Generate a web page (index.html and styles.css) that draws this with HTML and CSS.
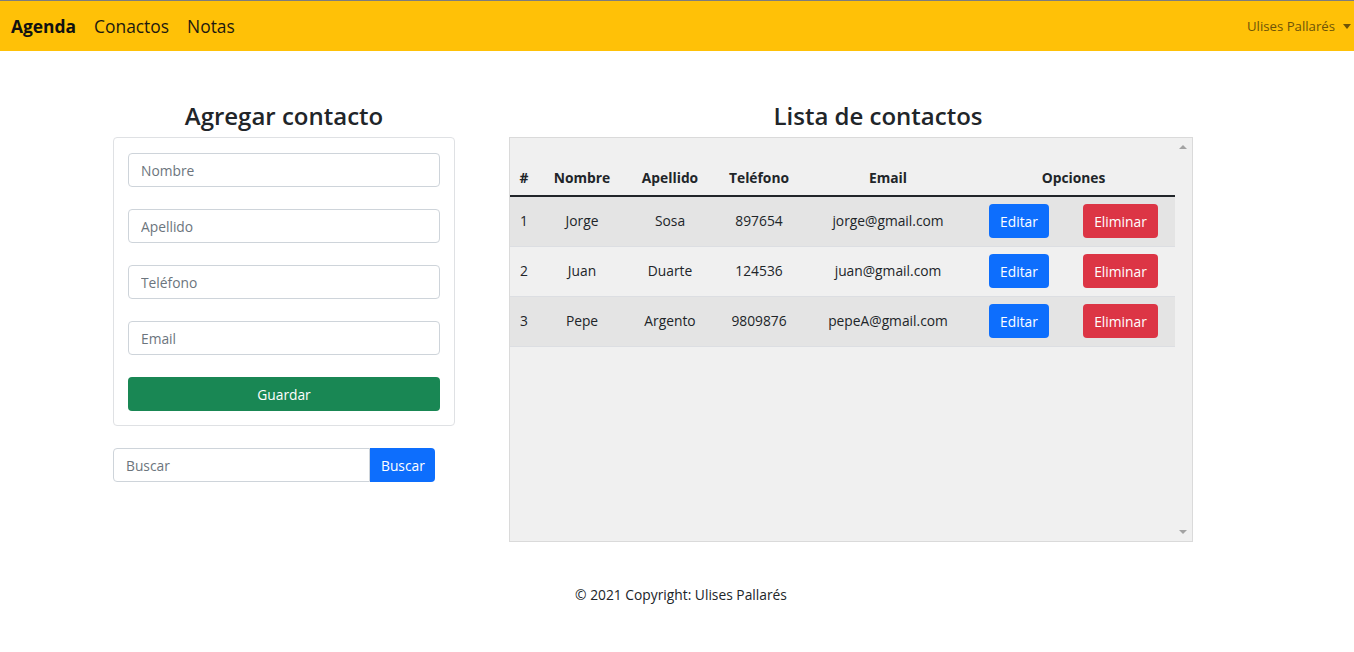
FILE: index.html
```html
<!DOCTYPE html>
<html lang="es">
<head>
<meta charset="utf-8">
<title>Agenda</title>
<link rel="stylesheet" href="styles.css">
</head>
<body>
<nav class="navbar">
  <div class="nav-left">
    <a class="brand">Agenda</a>
    <a class="nav-link">Conactos</a>
    <a class="nav-link">Notas</a>
  </div>
  <div class="user">Ulises Pallarés <span class="caret"></span></div>
</nav>
<main class="main">
  <section class="col-left">
    <h2 class="title">Agregar contacto</h2>
    <form class="card">
      <input class="field" placeholder="Nombre">
      <input class="field" placeholder="Apellido">
      <input class="field" placeholder="Teléfono">
      <input class="field" placeholder="Email">
      <button type="button" class="btn btn-green">Guardar</button>
    </form>
    <div class="search">
      <input class="search-input" placeholder="Buscar">
      <button type="button" class="btn btn-blue search-btn">Buscar</button>
    </div>
  </section>
  <section class="col-right">
    <h2 class="title">Lista de contactos</h2>
    <div class="table-box">
      <table class="table">
        <colgroup>
          <col class="c1"><col class="c2"><col class="c3"><col class="c4"><col class="c5"><col class="c6"><col class="c7">
        </colgroup>
        <thead>
          <tr><th>#</th><th>Nombre</th><th>Apellido</th><th>Teléfono</th><th>Email</th><th colspan="2">Opciones</th></tr>
        </thead>
        <tbody>
          <tr class="odd"><td>1</td><td>Jorge</td><td>Sosa</td><td>897654</td><td>jorge@gmail.com</td><td><button type="button" class="btn btn-blue">Editar</button></td><td><button type="button" class="btn btn-red">Eliminar</button></td></tr>
          <tr><td>2</td><td>Juan</td><td>Duarte</td><td>124536</td><td>juan@gmail.com</td><td><button type="button" class="btn btn-blue">Editar</button></td><td><button type="button" class="btn btn-red">Eliminar</button></td></tr>
          <tr class="odd"><td>3</td><td>Pepe</td><td>Argento</td><td>9809876</td><td>pepeA@gmail.com</td><td><button type="button" class="btn btn-blue">Editar</button></td><td><button type="button" class="btn btn-red">Eliminar</button></td></tr>
        </tbody>
      </table>
      <span class="arrow arrow-up"></span>
      <span class="arrow arrow-down"></span>
    </div>
  </section>
</main>
<footer class="footer">© 2021 Copyright: Ulises Pallarés</footer>
</body>
</html>
```
FILE: styles.css
```css
* { box-sizing: border-box; }
html, body { margin: 0; padding: 0; }
body {
  font-family: "Open Sans", "Noto Sans", sans-serif;
  font-size: 13.8px;
  color: #212529;
  background: #fff;
  line-height: 1.5;
}
.navbar {
  height: 51px;
  border-top: 1px solid #7d7d7d;
  background: #ffc107;
  display: flex;
  align-items: center;
  justify-content: space-between;
  padding: 1px 3px 0 11px;
}
.nav-left { display: flex; align-items: center; gap: 18px; }
.brand { font-weight: 700; font-size: 17.4px; color: #111; }
.nav-link { font-size: 17.4px; color: #1d1a10; }
.user { color: #6e5407; font-size: 13.2px; display: flex; align-items: center; gap: 8px; }
.caret {
  width: 0; height: 0;
  border-left: 4.5px solid transparent;
  border-right: 4.5px solid transparent;
  border-top: 5px solid #6e5407;
}
.main {
  display: flex;
  align-items: flex-start;
  padding: 44px 0 0 113px;
  gap: 54px;
}
.col-left { width: 342px; }
.col-right { width: 738px; }
.title {
  font-size: 24px;
  font-weight: 600;
  line-height: 35px;
  margin: 0 0 7px;
  padding-top: 3px;
  height: 35px;
  text-align: center;
}
.card {
  border: 1px solid #dfe1e4;
  border-radius: 4px;
  padding: 15px 14px 14px;
  display: flex;
  flex-direction: column;
  gap: 22px;
  margin: 0;
}
.field, .search-input {
  height: 34px;
  border: 1px solid #ced4da;
  border-radius: 4px;
  padding: 0 12px;
  font-family: inherit;
  font-size: 13.8px;
  color: #212529;
  background: #fff;
}
.field::placeholder, .search-input::placeholder { color: #6c757d; }
.btn {
  height: 34px;
  border: none;
  border-radius: 4px;
  font-family: inherit;
  font-size: 13.8px;
  color: #fff;
  padding: 0 11px;
  cursor: pointer;
}
.btn-green { background: #198754; width: 100%; }
.btn-blue { background: #0d6efd; }
.btn-red { background: #dc3545; }
.search { display: flex; margin-top: 22px; }
.search-input { width: 257px; border-radius: 4px 0 0 4px; }
.search-btn { width: 65px; border-radius: 0 4px 4px 0; }
.table-box {
  position: relative;
  width: 684px;
  height: 405px;
  background: #f0f0f0;
  border: 1px solid #dadada;
  padding: 20px 17px 0 0;
}
.table {
  width: 665px;
  border-collapse: collapse;
  table-layout: fixed;
}
.c1 { width: 28px; }
.c2 { width: 88px; }
.c3 { width: 88px; }
.c4 { width: 90px; }
.c5 { width: 168px; }
.c6 { width: 94px; }
.c7 { width: 109px; }
.table th {
  height: 38px;
  font-weight: 700;
  text-align: center;
  padding: 4px 0 0;
  border-bottom: 2px solid #212529;
}
.table td {
  height: 50px;
  text-align: center;
  padding: 0;
  border-bottom: 1px solid #dcdee2;
}
.table tr.odd td { background: #e4e4e4; }
.arrow {
  position: absolute;
  right: 5px;
  width: 0; height: 0;
  border-left: 4px solid transparent;
  border-right: 4px solid transparent;
}
.arrow-up { top: 7px; border-bottom: 4px solid #a3a3a3; }
.arrow-down { bottom: 7px; border-top: 4px solid #a3a3a3; }
.footer {
  text-align: center;
  padding: 43px 0 0 8px;
  font-size: 13.8px;
}
```
